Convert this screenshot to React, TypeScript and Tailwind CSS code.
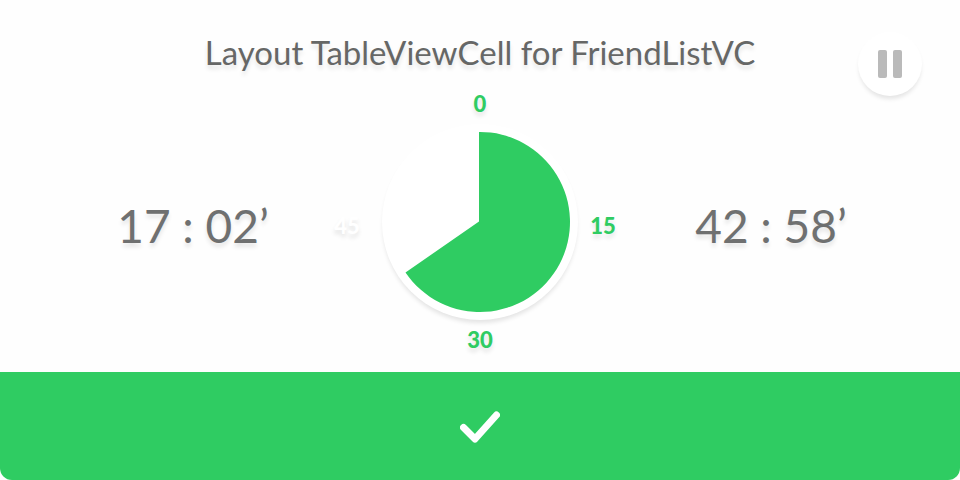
import React from "react";

const textShadow = "[text-shadow:0_4px_4px_rgba(0,0,0,0.10)]";
const markStyle = `text-[22px] leading-4 font-black text-[#2fcc62] ${textShadow}`;
const timeStyle = `text-[46px] leading-[56px] text-center whitespace-nowrap text-[#6f7070] ${textShadow}`;

function Dial() {
  return (
    <div className="size-[196px] shrink-0 rounded-full bg-white shadow-[0_4px_4px_-1px_rgba(0,0,0,0.10)]">
      <svg viewBox="0 0 196 196" className="block size-full" role="img" aria-label="Time elapsed">
        <path d="M97 97.5V8A90 90 0 1 1 23.5 148.5Z" fill="#2fcc62" />
      </svg>
    </div>
  );
}

export default function App() {
  return (
    <div className="min-h-screen flex flex-col bg-white font-['Lato','Open_Sans',sans-serif]">
      <main className="flex-1 bg-[#fefefe] pb-6">
        <header className="grid grid-cols-[1fr_auto_1fr] items-start pt-8">
          <h1 className={`col-start-2 text-[33px] leading-10 whitespace-nowrap text-[#666766] ${textShadow}`}>
            Layout TableViewCell for FriendListVC
          </h1>
          <div className="flex justify-end pr-[38px]">
            <button
              type="button"
              aria-label="Pause"
              className="size-16 rounded-full bg-white flex items-center justify-center gap-[6px] shadow-[0_4px_4px_-1px_rgba(0,0,0,0.10)]"
            >
              <span className="w-[9px] h-7 rounded-[2px] bg-[#bababa]" />
              <span className="w-[9px] h-7 rounded-[2px] bg-[#bababa]" />
            </button>
          </div>
        </header>

        <section className="flex flex-col gap-3">
          <div className={`text-center ${markStyle}`}>0</div>
          <div className="grid grid-cols-[1fr_auto_1fr] items-center">
            <div className="flex items-center pt-2 pl-[52px] pr-[22px]">
              <time className={`flex-1 ${timeStyle}`}>17 : 02’</time>
              <span className={`w-[26px] text-center text-[22px] leading-4 font-black text-white ${textShadow}`}>45</span>
            </div>
            <Dial />
            <div className="flex items-center pt-2 pl-3 pr-[34px]">
              <span className={`w-[26px] text-center ${markStyle}`}>15</span>
              <time className={`flex-1 ${timeStyle}`}>42 : 58’</time>
            </div>
          </div>
          <div className={`text-center ${markStyle}`}>30</div>
        </section>
      </main>

      <button
        type="button"
        aria-label="Done"
        className="w-full h-[108px] rounded-b-xl bg-[#2fcc62] flex items-center justify-center"
      >
        <svg viewBox="0 0 40 34" className="w-10 h-[34px]" fill="none" aria-hidden="true">
          <path d="M3.5 18.5L15 30L36.5 6" stroke="#fff" strokeWidth="7" strokeLinecap="round" strokeLinejoin="round" />
        </svg>
      </button>
    </div>
  );
}
